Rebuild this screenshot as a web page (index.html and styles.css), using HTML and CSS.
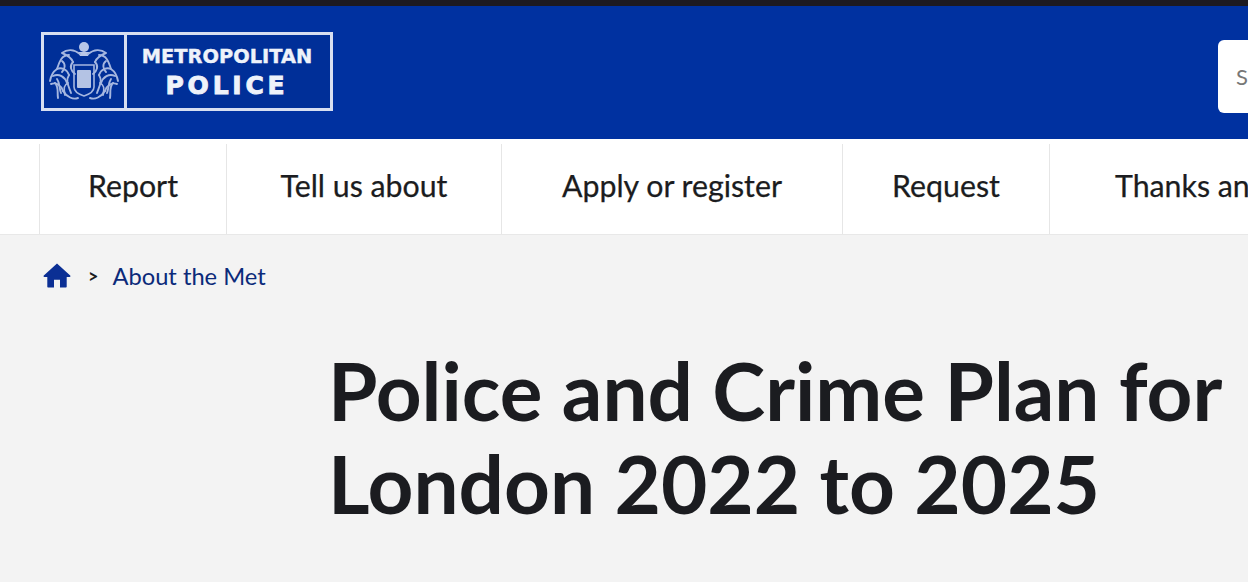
FILE: index.html
```html
<!DOCTYPE html>
<html lang="en">
<head>
<meta charset="utf-8">
<title>Police and Crime Plan for London 2022 to 2025</title>
<link rel="stylesheet" href="styles.css">
</head>
<body>
<div class="topline"></div>
<header class="masthead">
  <a class="logo" href="#">
    <span class="crest">
      <svg class="crest-art" width="70" height="62" viewBox="0 0 70 62" fill="none" stroke="#a5b7e0" stroke-width="1.9" stroke-linecap="round">
        <defs>
          <g id="half">
            <path d="M31 13C25 8 18 8 13 12M13 12C18 14 22 16 24 21M20 14C12 14 10 22 8 28C5 30 2 34 1 40"/>
            <path d="M8 28C12 26 18 28 20 34M4 35C10 32 16 36 18 42M2 43C7 41 12 44 14 50M9 57C8 51 10 46 6 42"/>
            <path d="M14 50C18 56 24 59 29 57M20 34C16 40 20 46 22 52M24 21C20 25 22 30 26 33M13 20C17 23 16 28 13 31M8 38C11 42 10 47 12 52"/>
            <path d="M19 42C15 44 14 47 16 54"/>
          </g>
        </defs>
        <circle cx="35" cy="6" r="5" fill="#b9c7e8" stroke="none"/>
        <path d="M29 11h12l-2 4h-8z" fill="#b9c7e8" stroke="none"/>
        <use href="#half"/>
        <use href="#half" transform="matrix(-1 0 0 1 70 0)"/>
        <path d="M25 24h20v22c0 4-4 7-10 9-6-2-10-5-10-9z" stroke-width="1.6"/>
        <rect x="28" y="29" width="14" height="18" rx="1" fill="#b4c3e4" stroke="none"/>
      </svg>
    </span>
    <span class="wordmark">
      <span class="wordmark-top">METROPOLITAN</span>
      <span class="wordmark-bottom">POLICE</span>
    </span>
  </a>
  <div class="search"><span class="search-text">Search</span></div>
</header>
<nav class="mainnav">
  <a class="navitem navitem-report" href="#">Report</a>
  <a class="navitem navitem-tell" href="#">Tell us about</a>
  <a class="navitem navitem-apply" href="#">Apply or register</a>
  <a class="navitem navitem-request" href="#">Request</a>
  <a class="navitem navitem-thanks" href="#">Thanks and complaints</a>
</nav>
<main class="content">
  <div class="breadcrumb">
    <a class="home" href="#" aria-label="Home">
      <svg width="28" height="25" viewBox="0 0 28 25"><path d="M14 .5 .8 12.6c-.6.6-.2 1.4.6 1.4h2.9v9.4c0 .6.4 1 1 1h5.7v-7.6h6v7.6h5.7c.6 0 1-.4 1-1V14h2.9c.8 0 1.2-.8.6-1.4z" fill="#0b2f94"/></svg>
    </a>
    <span class="sep">&gt;</span>
    <a class="crumb" href="#">About the Met</a>
  </div>
  <h1 class="title">Police and Crime Plan for<br>London 2022 to 2025</h1>
</main>
</body>
</html>
```
FILE: styles.css
```css
* { box-sizing: border-box; }
html, body { margin: 0; height: 100%; }
body {
  width: 1248px;
  height: 582px;
  overflow: hidden;
  background: #f3f3f3;
  font-family: Lato, "Liberation Sans", sans-serif;
  color: #1b1c20;
}
a { text-decoration: none; color: inherit; }
.topline { height: 6px; background: #1d1a20; }
.masthead {
  height: 133px;
  background: #0031a0;
  display: flex;
  align-items: flex-start;
  justify-content: space-between;
  padding: 26px 0 0 41px;
  overflow: hidden;
}
.logo {
  width: 292px;
  height: 79px;
  border: 3px solid #d7dff1;
  display: flex;
  background: #002f98;
}
.crest {
  width: 83px;
  flex: none;
  border-right: 3px solid #d7dff1;
  display: flex;
  align-items: center;
  justify-content: center;
}
.crest-art { filter: blur(0.4px); }
.wordmark {
  flex: 1;
  display: flex;
  flex-direction: column;
  align-items: center;
  padding: 10px 3px 0 0;
  color: #eef2fa;
  font-family: "DejaVu Sans", "Liberation Sans", sans-serif;
  font-weight: 700;
}
.wordmark-top { font-size: 19.4px; line-height: 24px; -webkit-text-stroke: 0.4px #eef2fa; }
.wordmark-bottom { font-size: 25px; line-height: 33px; letter-spacing: 3.8px; -webkit-text-stroke: 0.9px #eef2fa; }
.search {
  width: 30px;
  height: 73px;
  margin-top: 8px;
  background: #fff;
  border-radius: 6px 0 0 6px;
  padding: 23px 0 0 18px;
  overflow: hidden;
  color: #777;
  font-size: 22px;
  line-height: 28px;
}
.mainnav {
  height: 96px;
  background: #fff;
  border-bottom: 1px solid #e8e8e8;
  padding: 5px 0 0 39px;
  display: flex;
  overflow: hidden;
}
.navitem {
  flex: none;
  height: 90px;
  border-left: 1px solid #e6e6e6;
  font-size: 30.3px;
  line-height: 82px;
  white-space: nowrap;
  text-align: center;
  -webkit-text-stroke: 0.25px #1b1c20;
}
.navitem-report { width: 187px; }
.navitem-tell { width: 275px; }
.navitem-apply { width: 341px; }
.navitem-request { width: 207px; }
.navitem-thanks { padding-left: 65px; text-align: left; }
.content { padding: 24px 0 0 0; }
.breadcrumb {
  display: flex;
  align-items: center;
  height: 32px;
  padding-left: 43px;
  font-size: 23.7px;
}
.home { display: flex; margin-right: 17px; }
.sep { font-size: 18px; font-weight: 700; color: #1b1c20; margin-right: 14px; margin-top: 2px; }
.crumb { color: #0b2a7a; margin-top: 2px; }
.title {
  margin: 53px 0 0 328px;
  font-size: 80px;
  line-height: 93px;
  font-weight: 700;
  white-space: nowrap;
  color: #1b1c20;
}
```
